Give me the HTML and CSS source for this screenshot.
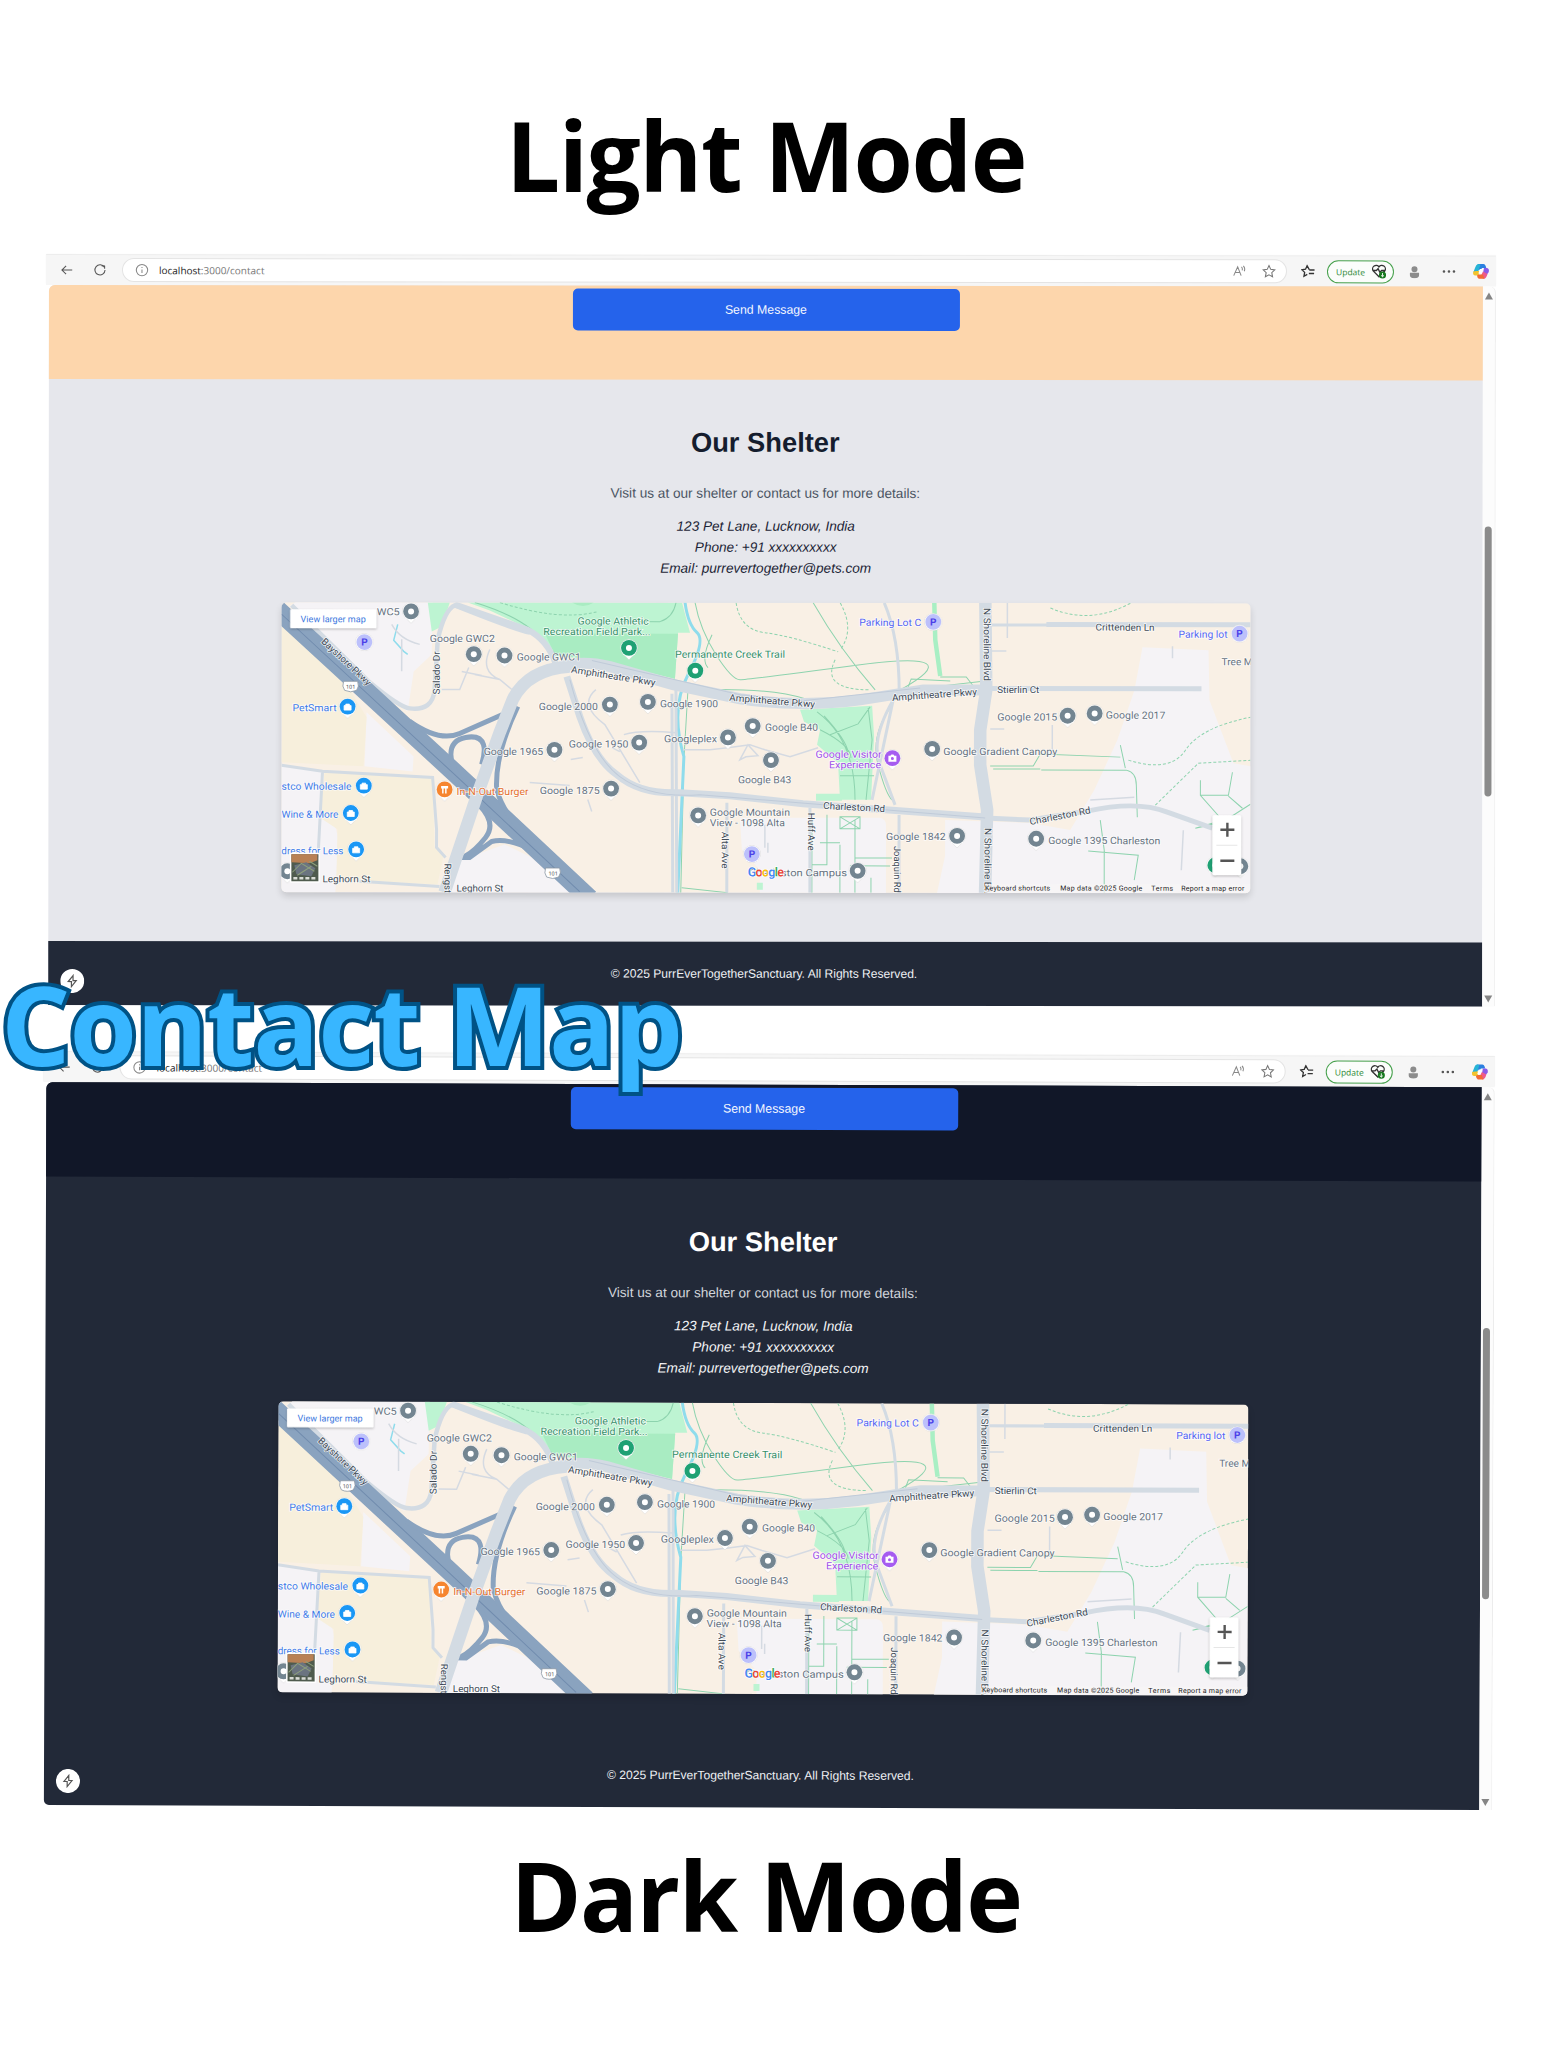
FILE: index.html
```html
<!DOCTYPE html>
<html lang="en">
<head>
<meta charset="utf-8">
<title>Contact Map</title>
<link rel="stylesheet" href="styles.css">
</head>
<body>
<main class="poster">
  <h1 class="mode-title">Light Mode</h1>
  <div class="browser browser-light"></div>
  <div class="browser browser-dark"></div>
  <h1 class="mode-title mode-title-dark">Dark Mode</h1>
  <div class="caption">Contact Map</div>
</main>

<template id="browser-template">
  <div class="toolbar">
    <svg class="ico back" viewBox="0 0 16 16"><path d="M14 8H2.500M7 3.200 2.200 8 7 12.800"/></svg>
    <svg class="ico reload" viewBox="0 0 16 16"><path d="M13.300 6.500V3.200M13.300 3.200H10M13 4.800A5.800 5.800 0 1 0 13.800 8"/></svg>
    <div class="address">
      <svg class="ico info" viewBox="0 0 16 16"><circle cx="8" cy="8" r="6.500"/><path d="M8 7.200v4M8 4.500v1.200"/></svg>
      <span class="url"><b>localhost</b>:3000/contact</span>
      <svg class="ico read" viewBox="0 0 16 16"><path d="M2 13 6.500 3 10.500 13M3.700 9.500H9.200M10.800 3Q12.400 4.500 11.600 7M13 1.800Q15.500 4.500 14 8"/></svg>
      <svg class="ico star" viewBox="0 0 16 16"><path d="m8 1.500 2 4.300 4.600.6-3.400 3.200.9 4.700L8 12l-4.100 2.300.9-4.700L1.400 6.400 6 5.800z"/></svg>
    </div>
    <svg class="ico favs" viewBox="0 0 16 16"><path d="M9.500 6 7 1.500 5.200 5.600 1 6.200l3.200 3-.8 4.500L7.200 11.500M9.500 6.500H15.500M9 10.500H15"/></svg>
    <div class="update"><span>Update</span>
      <svg class="pulse" viewBox="0 0 18 18"><path d="M9 15 2.500 8.500A3.700 3.700 0 0 1 9 4a3.700 3.700 0 0 1 6.500 4.500zM2 8h4l2-2 2 4 2-2h3"/><circle cx="13" cy="13" r="4"/><path class="tick" d="M13 10.800v4.200M11.300 13.400 13 15l1.700-1.600"/></svg>
    </div>
    <svg class="avatar" viewBox="0 0 12 14"><circle cx="6" cy="4" r="3.300"/><path d="M1 8h10v2.500a5 3.300 0 0 1-10 0z"/></svg>
    <svg class="dots" viewBox="0 0 14 4"><circle cx="2" cy="2" r="1.300"/><circle cx="7" cy="2" r="1.300"/><circle cx="12" cy="2" r="1.300"/></svg>
    <svg class="copilot" viewBox="0 0 18 18"><path fill="#2b7fe0" d="M6 1.500h5.500q1.500 0 2.200 2l.6 2H10l-1 2H4z"/><path fill="#27b4d6" d="M6 1.500Q4 2 3.200 5L1.500 9.500 6 10 8.500 2z"/><path fill="#f2c32e" d="M1.200 9Q.5 13 3.500 13h3L8 8.500H4z"/><path fill="#8b5be8" d="M12 5.500h3q2.500.5 1.800 4L15 12l-4-1z"/><path fill="#ee5a8b" d="m11 9 4.500 2.500q-1 4-3.300 4.800L8 15z"/><path fill="#f26a35" d="M6.500 12H11l1.500 4.300H7Q5.500 16 5 13z"/><path fill="#fff" d="M7.800 6.500h3.400L9.800 11H6.400z"/></svg>
  </div>
  <div class="viewport">
    <div class="page">
      <section class="form-end"><div class="send">Send Message</div></section>
      <section class="shelter">
        <h2>Our Shelter</h2>
        <p>Visit us at our shelter or contact us for more details:</p>
        <address><span>123 Pet Lane, Lucknow, India</span><span>Phone: +91 xxxxxxxxxx</span><span>Email: purrevertogether@pets.com</span></address>
        <svg class="map" viewBox="282 603 968 290" preserveAspectRatio="none">
          <rect x="282" y="603" width="968" height="290" fill="#f9f0e5"/>
          <g fill="#f5f3f6">
            <path d="M296 603H433L432 655 414 672 408 712 372 686 290 607zM367 713 414 757 413 772 365 767zM282 767 323 772 339 840 336 893H282zM457 862 505 845 532 858 570 893H452z"/>
            <path d="M740 818H880Q886 819 886 826V893H760V870L742 850zM1142 647 1208 650 1209 700 1233 763 1250 766V893H937L945 856V820L1030 823 1070 830 1094 790 1117 740 1134 690z"/>
          </g>
          <g fill="#f7efdc">
            <path d="M282 622 350 690 367 718 364 767 282 763zM325 773 433 778 435 848 444 856 438 885 337 880 338 830 320 818z"/>
          </g>
          <path fill="#bdf4d2" d="M468 603H682L690 633H678L675 679 590 659 553 656 540 638 524 627 490 611zM428 603H450L442 627 432 632z"/>
          <path fill="#a9ecc2" d="M545 634H678L675 679 590 659 556 657zM572 603Q583 610 594 603z"/>
          <path fill="#bdf4d2" d="M800 710 872 706 874 737 871 800H840L838 763 817 745 820 730 804 722zM816 794H842V801H816zM757 883h6v7h-6z"/>
          <g class="trail">
            <path d="M475 603Q530 620 545 645L558 656M620 622H660Q673 618 676 603M695 603Q700 630 716 655T740 680 860 665 900 690M813 603Q840 650 875 690M712 635Q700 660 708 668M700 690Q770 688 805 699T880 693L985 681M688 690 684 760 681 893M682 888 728 893"/>
            <path d="M817 712Q855 740 855 800M830 735 858 724 870 707M820 730Q850 745 851 758M868 708 872 740 866 800M892 705Q870 735 878 765T892 800M812 820V893M827 815V865H812M840 845V893M820 843H840M855 820V893M855 858H892M850 866H890M871 878V893M840 817H860V829H840zL860 829M860 817 840 829M824 716Q846 740 848 752M840 776H874"/>
            <path class="wide" d="M934 603 935 640 940 676"/>
            <path d="M940 677H966L973 686M908 687 911 679 950 681M990 766H1033L1040 754 1120 757M993 769H1040M1041 770H1126Q1136 772 1136 785L1137 817M1120 745 1125 768M1100 820 1104 850V893M1088 851 1138 855 1134 880M1200 780V795L1222 820 1195 828 1222 822 1250 804M1200 795H1228L1232 772M1228 796 1242 808"/>
            <path class="dash" d="M736 603Q740 630 765 633T838 652M840 603Q855 630 840 650M1050 608Q1090 625 1130 603M1128 760Q1170 773 1185 750T1250 717M1155 805 1198 763 1250 760M835 660Q820 690 870 690M500 603Q560 622 598 612"/>
          </g>
          <path class="water" d="M685 603Q688 625 697 633T688 675 684 757L678 893"/>
          <path class="water thin" d="M398 625 394 641 404 652 408 655"/>
          <g class="lane">
            <path d="M392 625Q400 640 420 645M402 640 402 672M469 668 460 690 442 690M475 675 500 680 512 690M490 650Q480 672 500 680M462 672 482 676M596 690Q578 705 605 725L640 783M624 735Q640 730 676 733M620 752 612 748M683 750H710Q730 748 750 745L765 750 790 757 818 748M740 760 748 745 758 756 746 757zM571 760 583 758M530 783 570 786M588 800 592 812M1007 603V638M990 651H1006M1052 725V755M990 729H1004M1090 800 1134 797M1183 830 1181 870M1172 646V658M765 825V848M768 843V853"/>
          </g>
          <g class="road">
            <path class="w4" d="M292 606 370 683Q400 708 410 709 433 712 435 690L438 640Q445 610 455 606 515 630 530 633"/>
            <path class="w6" d="M455 605 527 630Q548 640 556 665"/>
            <path class="w3" d="M282 766 323 772 433 778 437 830V848L446 858M323 772 319 850M360 882 440 887M727 803V893M810 808V893M899 815V893M872 800 893 700Q870 740 880 765L895 805M884 603Q900 640 899 700M676 690 677 893M672 694 673 893"/>
            <path class="w7" d="M567 677 580 717Q595 760 617 775 640 795 680 793L730 796 803 804 985 817"/>
            <path class="w5" d="M985 818 1030 820 1087 811Q1137 800 1167 812L1212 828"/>
            <path class="w3" d="M985 625H1050"/><path class="w5" d="M1046 624.500H1250M987 688.500H1201"/>
          </g>
          <g class="highway">
            <path class="main" d="M272 605 457 775 590 899"/>
            <path d="M410 722Q440 743 460 734L512 711M462 782C450 766 444 742 466 738S486 752 482 765M518 707Q495 755 497 790 505 820 540 848M480 806Q497 824 486 838T465 857M455 858H470L492 842Q510 838 535 852L570 880"/>
            <path class="center" d="M282 615 457 777 580 892"/>
          </g>
          <g class="road"><path class="w12" d="M445 893 477 797 500 733 513 700Q528 670 570 667"/><path class="w11" d="M560 668Q580 660 610 667L673 685 740 699Q800 708 860 700L923 690 985 690"/><path class="w12" d="M985 603 986 690 980 730V765L987 810 985 893"/></g>
          <g class="road-edge"><path d="M570 680Q590 755 620 777T700 795L985 818M592 661 740 695 803 701 920 688"/></g>
          <g class="layer-labels"></g>
          <g class="shield"><path d="M344 682h14q2 5-1 9-6 3-12 0-3-4-1-9zM546 868.500h14q2 5-1 9-6 3-12 0-3-4-1-9z"/><text x="351" y="689.500">101</text><text x="553.500" y="876">101</text></g>
          <g class="layer-pins"></g>
          <text class="glogo" x="748" y="876.500" textLength="36"><tspan fill="#4285f4">G</tspan><tspan fill="#ea4335">o</tspan><tspan fill="#fbbc04">o</tspan><tspan fill="#4285f4">g</tspan><tspan fill="#34a853">l</tspan><tspan fill="#ea4335">e</tspan></text>
          <rect class="plate" x="290.500" y="610" width="86.500" height="19" rx="1"/>
          <text class="link" x="301" y="623" textLength="65">View larger map</text>
          <rect x="290.500" y="853.500" width="30" height="30" rx="1.500" fill="#fff"/>
          <path fill="#4f5b4e" d="M292 855h27v27h-27z"/><path fill="#b98155" d="M292 855h26v6l-8 3-18-1z"/><path fill="#6b7480" d="m295 866 12-3 9 6-4 8-15-2z"/><path fill="none" stroke="#8ea07c" stroke-width="1" d="m293 873 9-9 13 8M298 876l14-9M310 862l8 5"/><path stroke="#d9dcd6" stroke-width="2.500" stroke-dasharray="4 2" d="M294 879h23"/>
          <rect class="plate" x="1212" y="815" width="29" height="60" rx="1.500"/>
          <path stroke="#e6e6e6" d="M1216 845h21"/><path stroke="#555" stroke-width="2.400" d="M1220 829.500h14M1227 822.500v14M1220 860.500h14"/>
          <rect x="985" y="884" width="265" height="9" fill="#f7f5f6" opacity=".75"/>
          <g class="legal"><text x="985" y="890.500" textLength="65">Keyboard shortcuts</text><text x="1060" y="890.500" textLength="82">Map data ©2025 Google</text><text x="1151" y="890.500" textLength="22">Terms</text><text x="1181" y="890.500" textLength="63">Report a map error</text></g>
        </svg>
      </section>
      <footer><svg class="badge" viewBox="0 0 24 24"><circle cx="12" cy="12" r="12" fill="#fff"/><path d="M12.800 6.500 8 12.500h3.200v5l4.800-6h-3.200z" fill="none" stroke="#555" stroke-width="1.200"/></svg><span>© 2025 PurrEverTogetherSanctuary. All Rights Reserved.</span></footer>
    </div>
    <div class="scrollbar"><i class="up"></i><i class="thumb"></i><i class="down"></i></div>
  </div>
</template>
<script src="app.js"></script>
</body>
</html>
```

FILE: styles.css
```css
* { box-sizing: border-box; }
body { margin: 0; background: #fff; font-family: "Liberation Sans", Arial, sans-serif; }
.poster { position: relative; width: 1553px; height: 2048px; overflow: hidden; display: flex; flex-direction: column; }
.mode-title { flex: none; margin: 90px 0 0; padding-right: 21px; height: 130px; text-align: center; font: 700 96px/130px "Open Sans", sans-serif; letter-spacing: -1.500px; color: #000; }
.mode-title-dark { margin-top: 28px; }
.caption { position: absolute; left: 1px; top: 949px; font: 700 109px/150px "Open Sans", sans-serif; letter-spacing: -.900px; color: #38b6ff; -webkit-text-stroke: 8px #005285; paint-order: stroke fill; white-space: nowrap; }

.browser { width: 1450px; margin-left: 46px; transform-origin: 0 0; flex: none; }
.browser-light { margin-top: 34.500px; transform: rotate(.06deg); --hero: #fdd6ac; --section: #e6e7ec; --heading: #151d2e; --body: #4b5563; --addr: #1c2536; --foot: #222938; }
.browser-dark { margin-top: 47.500px; transform: translateX(-2.500px) rotate(.2deg) scale(1.001, 1.004); --hero: #111728; --section: #222938; --heading: #fff; --body: #d1d5db; --addr: #f3f4f6; --foot: #222938; }

.toolbar { display: flex; align-items: center; height: 30px; background: #f6f6f6; padding-left: 14px; box-shadow: 0 -1px 1px #ececec; }
.ico { flex: none; width: 14px; height: 14px; fill: none; stroke: #555; stroke-width: 1.200; }
.reload { margin-left: 19px; }
.address { display: flex; align-items: center; width: 1165px; height: 24px; margin-left: 15px; padding: 0 10px 0 12px; border-radius: 12px; background: #fff; border: 1px solid #e4e4e4; }
.info { stroke: #888; }
.url { margin-left: 10px; margin-right: auto; font: 10px/14px "Open Sans", sans-serif; color: #777; }
.url b { font-weight: 400; color: #222; }
.read { stroke: #888; }
.star { margin-left: 16px; stroke: #777; }
.favs { margin-left: 14px; stroke: #333; stroke-width: 1.500; }
.update { display: flex; align-items: center; justify-content: space-between; width: 67px; height: 23px; margin-left: 12px; padding: 0 6px 0 8px; border: 1px solid #46a04c; border-radius: 12px; background: #fbfdfb; font: 8.500px "Open Sans", sans-serif; color: #2f8a38; }
.pulse { width: 16px; height: 16px; fill: none; stroke: #333; stroke-width: 1.500; }
.pulse circle { fill: #187a20; stroke: none; }
.pulse .tick { stroke: #fff; stroke-width: 1; }
.avatar { width: 11px; height: 13px; margin-left: 15px; fill: #8c8c8c; }
.dots { width: 14px; height: 4px; margin-left: 22px; fill: #555; }
.copilot { width: 18px; height: 18px; margin-left: 16px; }

.viewport { display: flex; margin-left: 2.500px; }
.page { width: 1434px; background: var(--section); border-top-left-radius: 6px; }
.form-end { height: 94px; padding-top: 3px; background: var(--hero); border-top-left-radius: 6px; }
.send { width: 387px; height: 42px; margin-left: 524px; border-radius: 5px; background: #2563eb; color: #f3f6ff; font-size: 12.300px; line-height: 42px; text-align: center; }
.shelter { height: 562px; padding-top: 45px; text-align: center; }
.shelter h2 { margin: 0; font-size: 27.300px; line-height: 36px; color: var(--heading); }
.shelter p { margin: 22px 0 0; font-size: 13.600px; line-height: 22px; color: var(--body); }
.shelter address { display: flex; flex-direction: column; margin-top: 11px; padding-left: 1px; font-size: 13.600px; line-height: 21.200px; color: var(--addr); }
.map { display: block; width: 969px; height: 290px; margin: 23px 0 0 233px; border-radius: 5px; box-shadow: 0 4px 7px rgba(0, 0, 0, .14); overflow: hidden; }
footer { display: flex; align-items: center; height: 64px; padding-left: 12px; background: var(--foot); }
.badge { width: 24px; height: 24px; margin-top: 16px; }
footer span { margin-left: 527px; font-size: 12.100px; color: #eef0f4; }
.browser-dark .page, .browser-dark footer { border-bottom-left-radius: 5px; }
.browser-dark footer { background: none; }
.scrollbar { display: flex; flex-direction: column; align-items: center; width: 13px; padding: 6px 0 4px; background: #fcfcfc; border-right: 1px solid #ececec; border-top-right-radius: 6px; }
.scrollbar i { border: 4px solid transparent; }
.scrollbar .up { border-bottom: 7px solid #858585; border-top: 0; }
.scrollbar .down { border-top: 7px solid #858585; border-bottom: 0; margin-top: auto; }
.scrollbar .thumb { width: 7px; height: 270px; margin-top: 227px; border: 0; border-radius: 4px; background: #8b8b8b; }

.trail { fill: none; stroke: #8dd3ae; stroke-width: 1; }
.trail .wide { stroke: #a9efc4; stroke-width: 4.500; }
.trail .dash { stroke-dasharray: 3 2; }
.water { fill: none; stroke: #8fdcec; stroke-width: 3; }
.water.thin { stroke-width: 1.500; }
.lane { fill: none; stroke: #d5dae2; stroke-width: 1.500; }
.road { fill: none; stroke: #d3dbe3; }
.w3 { stroke-width: 3; } .w4 { stroke-width: 4.500; } .w5 { stroke-width: 5; } .w6 { stroke-width: 6; } .w7 { stroke-width: 7; } .w11 { stroke-width: 11; } .w12 { stroke-width: 12.500; }
.road-edge { fill: none; stroke: #c0cbd9; stroke-width: 1; }
.highway { fill: none; stroke: #8aa3bf; stroke-width: 5; }
.highway .main { stroke-width: 19; }
.highway .center { stroke: #718cae; stroke-width: 1; }
.map text { font-family: Roboto, sans-serif; font-size: 10px; fill: #66727f; paint-order: stroke; stroke: #fff; stroke-width: 1.500px; stroke-opacity: .8; }
.map text.road-name { fill: #414b57; font-size: 9.500px; }
.map text.green { fill: #37906a; }
.map text.blue { fill: #3f7be8; }
.map text.indigo { fill: #5566f2; }
.map text.purple { fill: #a04fe8; }
.map text.orange { fill: #e5702f; }
.map .shield path { fill: #fff; stroke: #8b96a3; stroke-width: .8; }
.map .shield text { font-size: 5.500px; text-anchor: middle; stroke: none; fill: #555; }
.map text.glogo { font-size: 12.500px; font-weight: 500; }
.map text.link { stroke: none; fill: #3c78e0; font-size: 9px; }
.plate { fill: #fff; filter: drop-shadow(0 1px 1px rgba(0, 0, 0, .25)); }
.map .legal text { stroke: none; fill: #222; font-size: 7px; }
.pin-halo { fill: #fff; filter: drop-shadow(0 .5px .6px rgba(0, 0, 0, .3)); }
.map text.pin-letter { font-size: 10px; font-weight: 700; text-anchor: middle; stroke: none; fill: #4b40e8; }
```

FILE: app.js
```js
// Map labels: x, baseline y, length, text, class, rotation
const labels = [
  [377, 616, 23, 'WC5'], [430, 642.5, 65, 'Google GWC2'], [517, 661, 64, 'Google GWC1'],
  [539, 710.5, 59, 'Google 2000'], [484, 755.5, 59.5, 'Google 1965'], [569, 748, 59.5, 'Google 1950'],
  [540, 794.5, 60, 'Google 1875'], [660, 707.5, 58, 'Google 1900'], [664, 742.5, 53, 'Googleplex'],
  [765, 731, 53, 'Google B40'], [738, 783.5, 53.5, 'Google B43'], [710, 816, 80, 'Google Mountain'],
  [710, 826.5, 75, 'View - 1098 Alta'], [749, 876.5, 98, 'Charleston Campus'], [886, 840, 59.5, 'Google 1842'],
  [943, 755, 114, 'Google Gradient Canopy'], [997, 720.5, 60, 'Google 2015'], [1105.5, 718.5, 59.5, 'Google 2017'],
  [1048, 844, 112, 'Google 1395 Charleston'], [1221, 665, 31, 'Tree M'],
  [577.7, 625, 71, 'Google Athletic', 'green'], [543.5, 635.5, 107, 'Recreation Field Park...', 'green'],
  [675, 658, 110, 'Permanente Creek Trail', 'green'],
  [815.5, 758, 66, 'Google Visitor', 'purple'], [829, 768.5, 52, 'Experience', 'purple'],
  [859, 626, 62, 'Parking Lot C', 'indigo'], [1178, 637.5, 49, 'Parking lot', 'indigo'],
  [293, 712, 44, 'PetSmart', 'blue'], [282, 790.5, 70, 'stco Wholesale', 'blue'],
  [282, 818.5, 57, 'Wine & More', 'blue'], [282, 855, 62, 'dress for Less', 'blue'],
  [457, 795.5, 72, 'In-N-Out Burger', 'orange'],
  [1095, 630.5, 59, 'Crittenden Ln', 'road-name'], [997, 693, 42, 'Stierlin Ct', 'road-name'],
  [323, 883, 48, 'Leghorn St', 'road-name'], [457, 892, 47, 'Leghorn St', 'road-name'],
  [321, 643, 64, 'Bayshore Pkwy', 'road-name', 43],
  [571, 673, 85, 'Amphitheatre Pkwy', 'road-name', 9], [729, 701, 86, 'Amphitheatre Pkwy', 'road-name', 4.5],
  [892, 701, 85, 'Amphitheatre Pkwy', 'road-name', -4], [823, 809, 62, 'Charleston Rd', 'road-name', 3],
  [1030, 825, 62, 'Charleston Rd', 'road-name', -11],
  [983.5, 608, 73, 'N Shoreline Blvd', 'road-name', 90], [984.5, 828, 73, 'N Shoreline Blvd', 'road-name', 90],
  [808, 813, 38, 'Huff Ave', 'road-name', 90], [722, 832, 37, 'Alta Ave', 'road-name', 90],
  [894, 846, 47, 'Joaquin Rd', 'road-name', 90], [440, 695, 43, 'Salado Dr', 'road-name', -90],
  [445, 864, 45, 'Rengstorff', 'road-name', 90],
];

const pins = {
  place: [[411.3, 612], [474, 654.7], [504.7, 656], [554.7, 750.3], [610, 705], [648, 702.3], [639.3, 743],
    [611.3, 789], [728, 737.7], [752.7, 726.3], [771, 760.3], [698.3, 815.7], [857.7, 871], [932, 749],
    [957, 836], [1036, 838.7], [1067.3, 715.7], [1094.3, 713.3], [1240, 866], [288, 872]],
  park: [[629, 648.3], [695.3, 671], [1215, 865]],
  shop: [[348, 707.3], [364.3, 786.3], [351.3, 813.7], [356.7, 850]],
  food: [[445, 790]],
  photo: [[892.3, 758.3]],
  parking: [[364.7, 642.7], [752, 854.3], [933, 622], [1239, 633.3]],
};
const pinColor = { place: '#738591', park: '#1fa174', shop: '#1a97f5', food: '#f6852f', photo: '#a65cf0', parking: '#bcc0fb' };
const dot = '<circle r="3" fill="#fff"/>';
const pinGlyph = {
  place: dot, park: dot,
  shop: '<path d="M-3.500-1h7v4.500h-7zM-1.800-1v-1.500h3.600V-1" fill="#fff" stroke="#fff" stroke-width=".8"/>',
  food: '<path d="M-3.500-3.500H3.500V-1H2V4H.5V-1H-1V4H-2.500V-1H-3.500z" fill="#fff"/>',
  photo: '<path d="M-4-2.500h2l1-1.300h2l1 1.300h2v6h-8z" fill="#fff"/><circle cy=".4" r="1.500" fill="#a65cf0"/>',
  parking: '<text class="pin-letter" y="3.500">P</text>',
};

const labelMarkup = labels.map(([x, y, len, text, cls = '', rot = 0]) =>
  `<text class="${cls}" transform="translate(${x} ${y}) rotate(${rot})" textLength="${len}" lengthAdjust="spacingAndGlyphs">${text.replace('&', '&amp;')}</text>`).join('');
const pinMarkup = Object.entries(pins).map(([kind, spots]) => spots.map(([x, y]) => {
  const tail = kind === 'parking' ? '' : 'M-6 6 0 12 6 6z';
  return `<g transform="translate(${x} ${y})"><g class="pin-halo"><circle r="8.700"/><path d="${tail}"/></g><circle r="7.900" fill="${pinColor[kind]}"/>${pinGlyph[kind]}</g>`;
}).join('')).join('');

const template = document.getElementById('browser-template');
document.querySelectorAll('.browser').forEach((frame) => {
  frame.append(template.content.cloneNode(true));
  frame.querySelector('.layer-labels').innerHTML = labelMarkup;
  frame.querySelector('.layer-pins').innerHTML = pinMarkup;
});
```
